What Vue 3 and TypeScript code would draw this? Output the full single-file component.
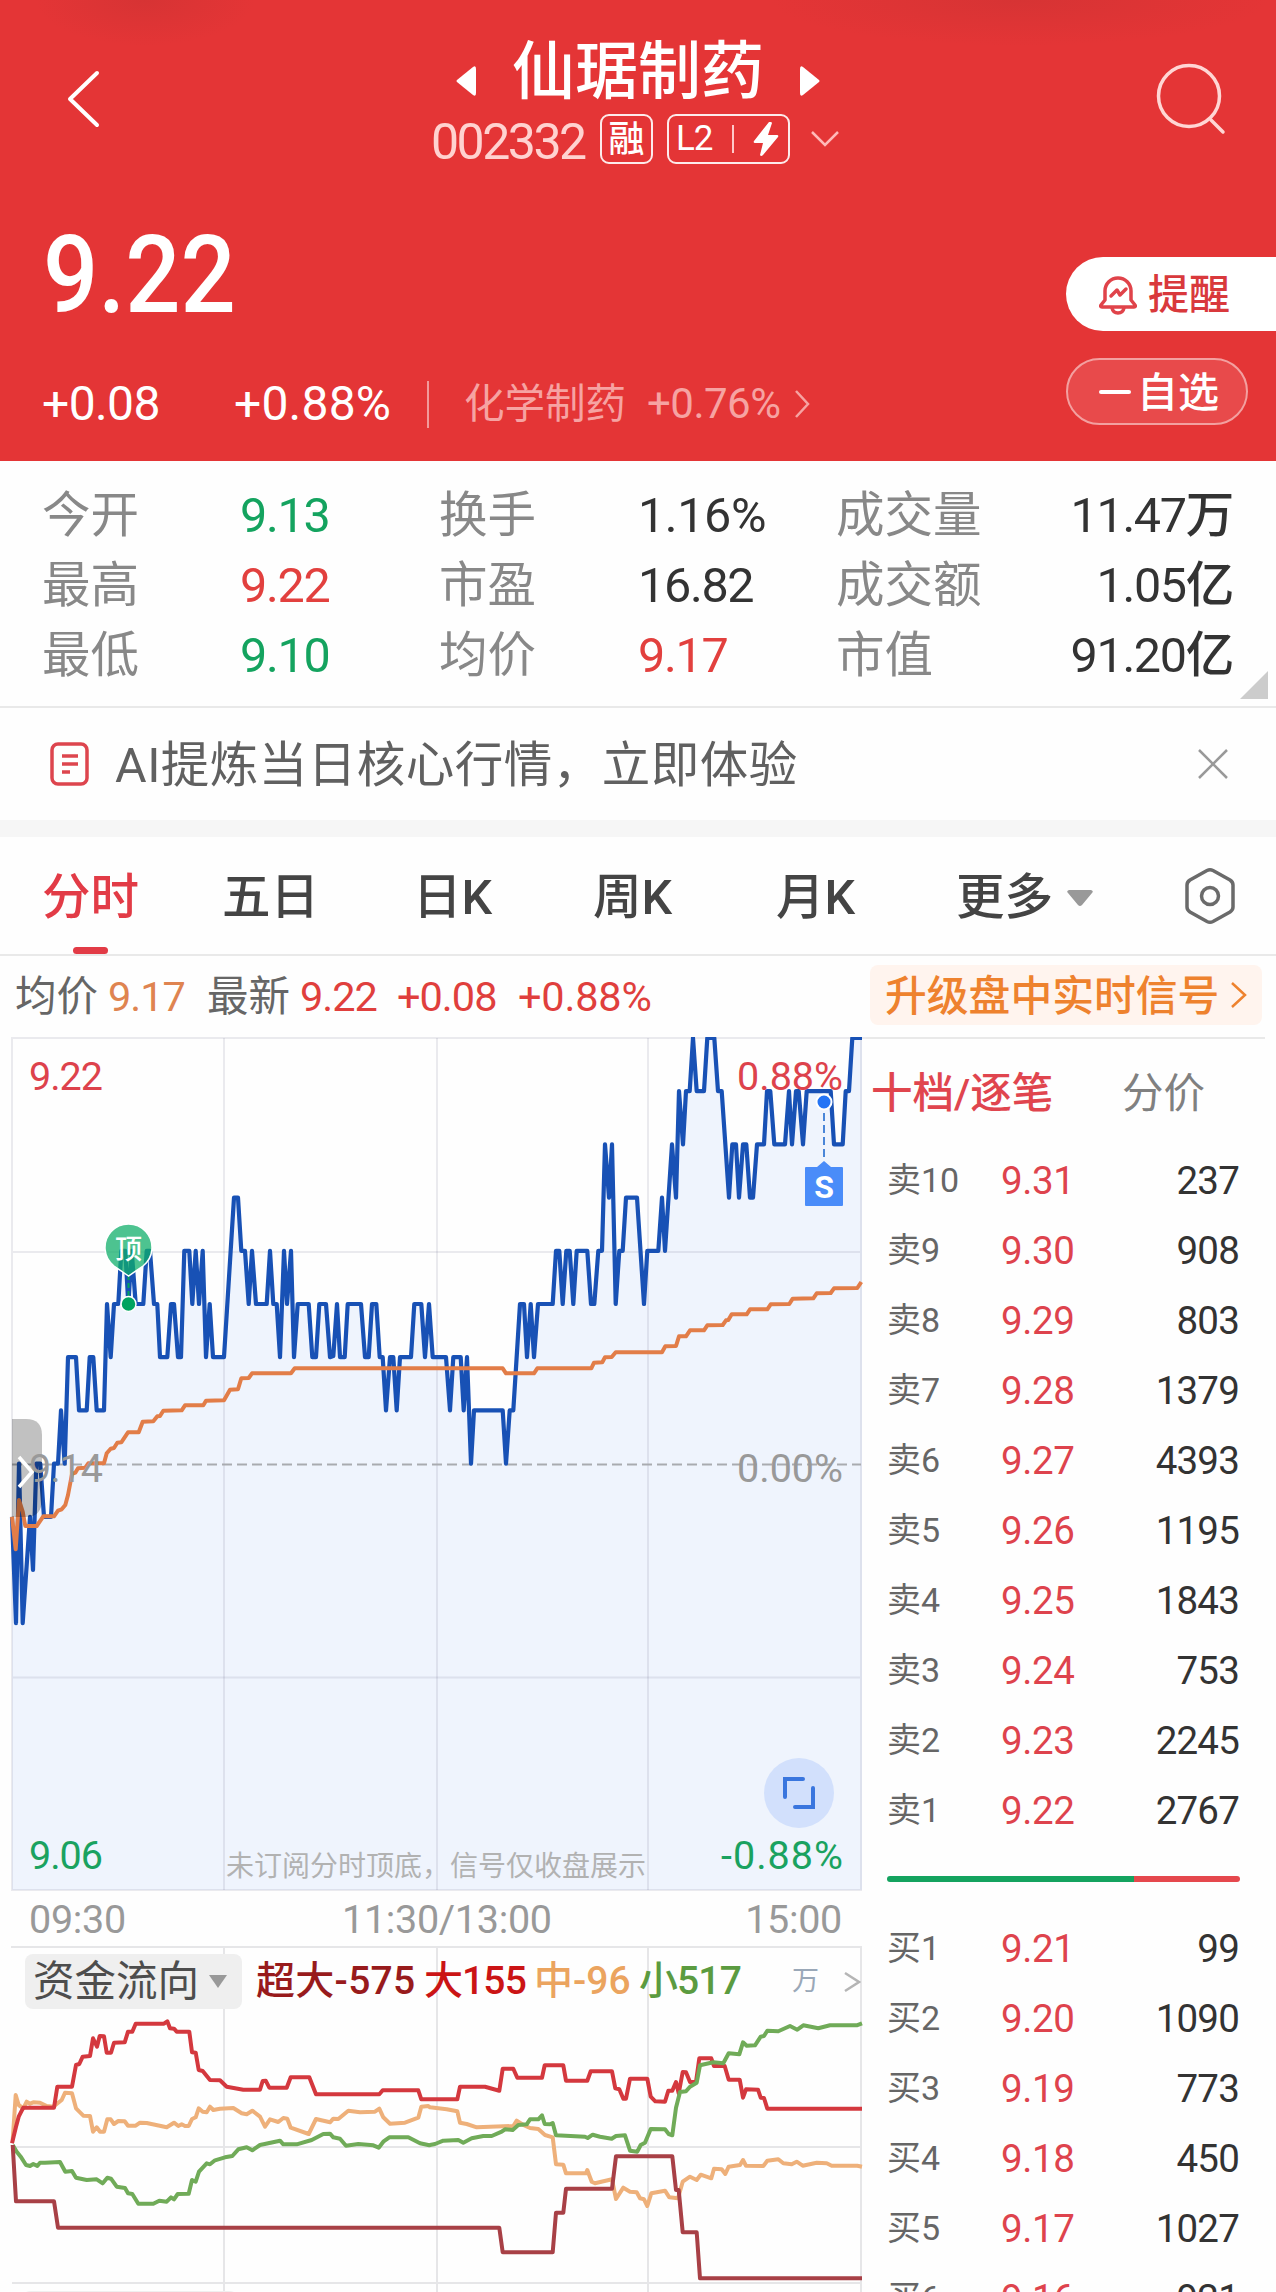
<script setup lang="ts">
type Pt = [number, number]
interface Order { name: string; price: string; volume: string }

const stats = [
  ['今开', '9.13', 'down', '换手', '1.16%', 'wide', '成交量', '11.47万'],
  ['最高', '9.22', 'up', '市盈', '16.82', '', '成交额', '1.05亿'],
  ['最低', '9.10', 'down', '均价', '9.17', 'up', '市值', '91.20亿'],
]

const tabs = ['分时', '五日', '日K', '周K', '月K']

const toOrders = (side: string, rows: [number, string, string][]): Order[] =>
  rows.map(([n, price, volume]) => ({ name: side + n, price, volume }))

const asks = toOrders('卖', [
  [10, '9.31', '237'], [9, '9.30', '908'], [8, '9.29', '803'], [7, '9.28', '1379'], [6, '9.27', '4393'],
  [5, '9.26', '1195'], [4, '9.25', '1843'], [3, '9.24', '753'], [2, '9.23', '2245'], [1, '9.22', '2767'],
])
const bids = toOrders('买', [
  [1, '9.21', '99'], [2, '9.20', '1090'], [3, '9.19', '773'], [4, '9.18', '450'], [5, '9.17', '1027'], [6, '9.16', '921'],
])

// Series are stored as "x,y" pairs in thirds of a pixel, one string per session.
const SESSION = 1290
const parse = (s: string): Pt[] => s.trim().split(/\s+/).map((p) => p.split(',').map(Number) as Pt)
const shift = (pts: Pt[], dx: number, dy: number): Pt[] => pts.map(([x, y]) => [x + dx, y + dy])
const draw = (pts: Pt[]): string => pts.map(([x, y]) => `${(x / 3).toFixed(1)},${(y / 3).toFixed(1)}`).join(' ')

// Price ticks: the second number counts cents below 9.22.
const priceAm = parse(`36,9 48,11 57,8 68,11 90,9 99,10 109,8 121,8 132,9 153,9 162,8 174,8 183,7 194,8 204,6 228,6 237,7 260,7
269,6 280,6 290,7 312,7 321,5 332,6 342,5 355,5 364,4 376,4 385,5 395,4 407,5 430,5 440,4 450,4 462,5 472,5 480,6 502,6 513,5
522,5 534,6 543,6 553,4 568,4 577,5 587,4 597,5 608,4 618,6 629,5 639,6 672,6 702,3 714,3 724,4 735,4 746,5 756,4 768,5 800,5
810,4 820,5 830,5 840,6 852,4 861,5 873,4 882,6 893,5 926,5 937,6 948,6 958,5 978,5 990,6 1000,5.98 1011,5 1020,6 1034,6
1043,5 1083,5 1095,6 1106,6 1116,5 1129,5 1139,6 1148,6 1158,7 1170,6 1180,6 1190,7 1200,6 1233,6 1243,5 1264,5 1275,6 1287,5`)
const pricePm = parse(`8,6 48,6 60,7 70,6 92,6 101,7 111,6 123,8 132,7 218,7 228,8 239,7 250,7 270,5 282,5 291,6 302,5 312,6 324,5
368,5 378,4 388,4 398,5 409,4 419,4 430,5 440,4 472,4 483,5 493,5 505,4 516,4 525,2 537,3 546,2 557,5 568,4 578,4 588,3 621,3
642,5 652,4 685,4 696,3 705,4 726,2 738,3 747,1 759,2 768,1 779,1 789,0 800,1 822,1 832,0 853,0 864,1 875,1 897,3 907,2 918,2
927,3 939,2 949,2 960,3 969,3 981,2 1002,2 1011,1 1021,1 1033,2 1065,2 1077,1 1086,2 1098,1 1106,1 1119,2 1130,1 1202,1
1212,2 1238,2 1247,1 1257,1 1267,0 1296,0`)
const price = draw(
  [...priceAm, ...shift(pricePm, SESSION, 0)].map(([x, level]): Pt => [x, 3 + level * 159.6]),
)
const priceArea = `12,853 ${price} 862,853`

const average = draw([
  ...shift(parse(`36,350 47,448 57,300 68,335 76,378 110,378 130,349 162,349 174,332 185,328 196,315 204,285 216,222 226,218
234,205 256,203 265,190 312,190 320,160 332,146 342,144 352,128 364,127 384,97 416,97 428,65 460,64 472,49 480,48 490,32
545,31 555,16 610,16 618,2 672,1`), 0, 1089),
  ...shift(parse('690,1349 714,1348 724,1315 746,1314 756,1300 873,1300 884,1285'), 0, -291),
  ...shift(parse(`218,1285 228,1300 312,1300 322,1285 484,1285 492,1268 517,1267 525,1252 545,1251 557,1237 696,1237 706,1219
738,1218 747,1189 768,1189 780,1171 822,1171 832,1156 878,1155 888,1141 895,1140 905,1123 950,1123 960,1108 1012,1108
1022,1093 1078,1092 1088,1076 1150,1075 1160,1060 1202,1059 1212,1045 1282,1044 1294,1026`), SESSION, -291),
])

const flow = (am: string, pm: string): string =>
  draw(shift([...parse(am), ...shift(parse(pm), SESSION, 0)], 0, -198))

const flows = [
  {
    color: '#eeb07a',
    points: flow(
      `38,780 47,645 56,675 70,685 80,665 90,671 100,667 120,668 140,678 160,680 185,660 195,638 216,640 228,685 250,707 270,708 279,755
290,742 300,755 312,755 322,718 332,718 342,732 355,723 374,724 384,737 407,737 420,728 440,729 500,742 522,728 535,738 545,733
555,738 566,738 576,717 587,712 596,685 608,695 620,697 630,680 640,690 660,686 700,684 725,700 740,703 757,692 780,710
795,740 810,718 835,726 850,714 862,716 872,743 926,762 948,717 990,727 1000,716 1015,717 1045,692 1080,697 1125,695
1138,686 1150,712 1170,731 1215,728 1255,713 1264,680 1285,678`,
      `0,682 50,688 82,694 90,728 110,732 140,742 250,738 260,722 280,735 300,744 325,747 345,765 368,772 378,853 400,854 408,880
468,880 472,870 485,905 495,910 546,898 558,957 580,923 600,935 620,937 630,955 642,958 652,978 664,940 705,932 718,952 744,955
758,905 780,890 800,900 812,884 844,895 852,866 875,868 886,882 896,860 930,855 939,840 948,857 1000,858 1012,842 1045,838
1060,850 1085,853 1100,845 1118,857 1160,848 1190,850 1205,857 1282,857 1296,860`,
    ),
  },
  {
    color: '#d4383e',
    points: flow(
      `36,790 48,740 56,710 70,683 162,683 172,620 216,620 228,555 238,552 248,530 270,528 279,475 291,500 299,468 312,469 320,518
333,518 342,488 374,487 384,455 397,455 407,431 492,431 502,424 510,445 522,446 530,455 568,455 576,517 587,518 596,570
608,573 630,600 660,601 680,620 730,629 780,629 788,603 797,602 808,623 860,623 872,592 928,592 948,643 1138,643 1148,631
1255,631 1264,658`,
      `82,658 90,620 165,620 208,632 218,566 250,566 262,593 336,593 344,556 400,556 408,602 472,602 482,574 546,574 556,625
568,628 580,656 588,656 600,596 652,596 662,650 676,664 705,665 715,632 727,632 738,606 746,640 758,576 768,577 780,606
798,606 808,535 844,535 852,558 884,558 896,599 929,599 939,653 948,628 984,629 992,653 1002,654 1012,686 1296,686`,
    ),
  },
  {
    color: '#70ab58',
    points: flow(
      `38,795 50,815 62,830 78,855 90,858 100,852 112,858 120,848 135,848 180,846 196,875 216,873 228,893 260,900 290,898 308,910
322,893 333,896 350,920 375,924 384,940 397,942 415,971 460,971 478,962 500,965 513,952 522,958 533,942 566,941 576,900
587,905 597,875 620,850 630,853 645,841 675,832 697,828 715,808 740,802 757,811 780,795 840,782 850,793 890,793 935,780
970,762 990,761 1000,772 1020,776 1038,797 1075,792 1120,796 1136,803 1150,785 1168,772 1225,772 1260,790 1288,796`,
      `0,795 15,792 40,782 85,780 100,788 125,775 160,768 185,768 215,755 225,748 248,750 265,735 290,733 300,718 325,718 336,706
344,732 360,733 368,729 378,766 465,770 473,774 488,764 510,770 545,776 558,768 585,766 600,812 622,815 632,795 645,788
662,747 705,748 716,762 727,766 738,683 750,636 768,634 780,620 800,608 810,556 850,547 880,550 896,520 928,523 939,487
950,497 975,496 992,470 1002,468 1012,452 1045,454 1080,438 1102,449 1120,436 1165,445 1200,436 1280,436 1296,430`,
    ),
  },
  {
    color: '#a84046',
    points: flow(
      '38,795 48,964 162,964 174,1043 1200,1043',
      `208,1043 218,1117 368,1117 378,998 400,998 408,926 546,926 558,829 727,829 738,930 746,930 758,1057 800,1057 810,1195
1296,1195`,
    ),
  },
]

const columns = [224, 437, 648]
</script>

<template>
  <div class="page">
    <header class="hero">
      <div class="nav">
        <svg class="back" width="36" height="60" viewBox="0 0 36 60"><path d="M31 4 4 30l27 26" /></svg>
        <div class="heading">
          <div class="title-row">
            <svg class="arrow" width="20" height="30" viewBox="0 0 20 30"><path d="M1 14Q0 15 1 16L17 29Q20 31 20 27V3Q20-1 17 1Z" /></svg>
            <h1>仙琚制药</h1>
            <svg class="arrow" width="20" height="30" viewBox="0 0 20 30"><path d="M19 14Q20 15 19 16L3 29Q0 31 0 27V3Q0-1 3 1Z" /></svg>
          </div>
          <div class="code-row">
            <span class="code">002332</span>
            <span class="badge margin">融</span>
            <span class="badge level">
              <span class="l2">L2</span><i />
              <svg width="26" height="34" viewBox="0 0 26 34"><path d="M16 0 1 19q-1 2 1 2h8L7 33q1 2 3 0L25 15q1-2-1-2h-9l4-12q-1-2-3-1Z" /></svg>
            </span>
            <svg class="caret" width="28" height="18" viewBox="0 0 28 18"><path d="M1 2l13 13L27 2" /></svg>
          </div>
        </div>
        <svg class="search" width="74" height="74" viewBox="0 0 74 74"><circle cx="35" cy="35" r="30.5" /><path d="M57 59 69 71" /></svg>
      </div>
      <div class="quote">
        <div class="quote-main">
          <div class="price">9.22</div>
          <div class="change">
            <span>+0.08</span>
            <span class="pct">+0.88%</span>
            <i />
            <span class="sector">化学制药</span>
            <span class="sector sector-pct">+0.76%</span>
            <svg width="18" height="30" viewBox="0 0 18 30"><path d="M3 2l12 13L3 28" /></svg>
          </div>
        </div>
        <div class="actions">
          <div class="remind">
            <svg width="38" height="42" viewBox="0 0 38 42">
              <path d="M6 27V18a13 13 0 0 1 26 0v9l4 5q1 2-1 2H3q-2 0-1-2Z" />
              <path d="M13 35q1 5 6 5t6-5" />
              <path d="M12 23l6-6 3 5 6-6" />
            </svg>
            <span>提醒</span>
          </div>
          <div class="watch"><i /><span>自选</span></div>
        </div>
      </div>
    </header>

    <section class="stats">
      <div v-for="row in stats" :key="row[0]" class="stat-row">
        <span class="label">{{ row[0] }}</span>
        <span :class="row[2]">{{ row[1] }}</span>
        <span class="label">{{ row[3] }}</span>
        <span :class="row[5]">{{ row[4] }}</span>
        <span class="label">{{ row[6] }}</span>
        <span class="end">{{ row[7] }}</span>
      </div>
      <svg class="corner" width="28" height="28" viewBox="0 0 28 28"><path d="M28 0V28H0Z" /></svg>
    </section>

    <section class="ai">
      <svg width="40" height="44" viewBox="0 0 40 44">
        <rect x="2" y="2" width="35" height="40" rx="6" />
        <path d="M12 14h16M12 22h16M12 30h8" />
      </svg>
      <span>AI提炼当日核心行情，立即体验</span>
      <svg class="close" width="32" height="32" viewBox="0 0 32 32"><path d="M2 2l28 28M30 2 2 30" /></svg>
    </section>

    <nav class="tabs">
      <span v-for="(tab, i) in tabs" :key="tab" :class="{ active: i === 0 }">{{ tab }}</span>
      <span class="more">更多<svg width="26" height="16" viewBox="0 0 26 16"><path d="M2 0H24Q27 1 25 3L15 15Q13 17 11 15L1 3Q-1 1 2 0Z" /></svg></span>
      <svg class="gear" width="52" height="58" viewBox="0 0 52 58">
        <path d="M23 3.500q3-1.500 6 0L46 13q3 2 3 5V40q0 3-3 5L29 54.500q-3 1.500-6 0L6 45q-3-2-3-5V18q0-3 3-5Z" />
        <circle cx="26" cy="29" r="8.500" />
      </svg>
    </nav>

    <main class="body">
      <div class="left">
        <div class="summary">
          <span class="k">均价</span><span class="v avg">9.17</span>
          <span class="k">最新</span><span class="v">9.22</span>
          <span class="v">+0.08</span><span class="v last">+0.88%</span>
        </div>

        <svg class="chart" width="866" height="855" viewBox="0 0 866 855">
          <polygon :points="priceArea" fill="#eff4fd" />
          <g stroke="#5a5a78" stroke-opacity=".12" stroke-width="2" fill="none">
            <path d="M11 1H866M12 1V854M861 1V854M11 853H862M12 215H861M12 640.500H861" />
            <path v-for="x in columns" :key="x" :d="`M${x} 1V853`" />
          </g>
          <path d="M12 427.500H861" stroke="#a9abb0" stroke-width="2" stroke-dasharray="10 5" />
          <polyline :points="price" fill="none" stroke="#1851b5" stroke-width="4.200" stroke-linejoin="round" />
          <polyline :points="average" fill="none" stroke="#e27d48" stroke-width="4" stroke-linejoin="round" />

          <path d="M12 382H26Q42 382 42 398V462Q42 480 26 480H12Z" fill="#000" fill-opacity=".24" />
          <path d="M19 420 32 435 19 450" fill="none" stroke="#fff" stroke-width="3.500" />

          <g class="axis">
            <text x="29" y="53" textLength="74" fill="#dd424c">9.22</text>
            <text x="29" y="445" textLength="74" fill="#999">9.14</text>
            <text x="29" y="832" textLength="74" fill="#1aa260">9.06</text>
            <text x="737" y="53" textLength="106" fill="#dd424c">0.88%</text>
            <text x="737" y="445" textLength="106" fill="#999">0.00%</text>
            <text x="721" y="832" textLength="122" fill="#1aa260">-0.88%</text>
          </g>
          <text class="note" x="226" y="839" textLength="420">未订阅分时顶底，信号仅收盘展示</text>

          <path d="M128.500 238V262" stroke="#00a35f" stroke-width="2" stroke-dasharray="5 3" />
          <circle cx="128.500" cy="267" r="7.500" fill="#00a35f" stroke="#fff" stroke-width="1.500" />
          <path d="M128.500 239 114 229A23.500 23.500 0 1 1 143 229Z" fill="#0fae69" fill-opacity=".74" stroke="#fff" stroke-width="1.500" />
          <text class="peak" x="128.500" y="222">顶</text>

          <path d="M824 76V124" stroke="#4a86d8" stroke-width="2" stroke-dasharray="8 4" />
          <circle cx="824" cy="65" r="7.500" fill="#2474f5" stroke="#fff" stroke-width="2" />
          <path d="M806 130H817L824 124 831 130H842Q843 130 843 131V168Q843 169 842 169H806Q805 169 805 168V131Q805 130 806 130Z" fill="#4a8cf9" />
          <text class="sell" x="824" y="161">S</text>

          <circle cx="799" cy="756" r="35" fill="#d2e0fc" />
          <path d="M785 760V742H803M813 751V770H795" fill="none" stroke="#3a76de" stroke-width="4" stroke-linecap="round" />
        </svg>

        <div class="times"><span>09:30</span><span>11:30/13:00</span><span>15:00</span></div>

        <div class="flow">
          <svg width="866" height="346" viewBox="0 0 866 346">
            <g stroke="#e6e6e8" stroke-width="2" fill="none">
              <path d="M11 1H862M12 201H861M12 337H861M861 1V346" />
              <path v-for="x in columns" :key="x" :d="`M${x} 1V346`" />
            </g>
            <polyline
              v-for="s in flows" :key="s.color" :points="s.points" :stroke="s.color"
              fill="none" stroke-width="4" stroke-linejoin="round"
            />
            <path d="M26 346q2-1 6-1H228q4 0 6 1Z" fill="#efefef" />
          </svg>
          <div class="legend">
            <span class="picker">资金流向<svg width="18" height="13" viewBox="0 0 18 13"><path d="M0 0H18L9 13Z" /></svg></span>
            <span class="lg xl">超大-575</span>
            <span class="lg l">大155</span>
            <span class="lg m">中-96</span>
            <span class="lg s">小517</span>
            <span class="unit">万</span>
            <svg class="go" width="18" height="24" viewBox="0 0 18 24"><path d="M2 3l14 9L2 21" /></svg>
          </div>
        </div>
      </div>

      <aside class="right">
        <div class="upgrade">
          <span>升级盘中实时信号</span>
          <svg width="18" height="30" viewBox="0 0 18 30"><path d="M2 3l13 12L2 27" /></svg>
        </div>
        <div class="book">
          <div class="book-tabs"><span class="on">十档/逐笔</span><span>分价</span></div>
          <div v-for="o in asks" :key="o.name" class="order">
            <span>{{ o.name }}</span><b>{{ o.price }}</b><em>{{ o.volume }}</em>
          </div>
          <div class="ratio"><i class="sellside" /><i class="buyside" /></div>
          <div v-for="o in bids" :key="o.name" class="order">
            <span>{{ o.name }}</span><b>{{ o.price }}</b><em>{{ o.volume }}</em>
          </div>
        </div>
      </aside>
    </main>
  </div>
</template>

<style>
body { margin: 0; background: #fefefe; }
</style>

<style scoped>
.page {
  width: 1276px;
  height: 2292px;
  overflow: hidden;
  background: #fefefe;
  font-family: Roboto, "Noto Sans CJK SC", sans-serif;
  color: #333;
  white-space: nowrap;
}
.page svg { display: block; flex: none; }
.page i { display: block; flex: none; }

.hero {
  height: 461px;
  color: #fff;
  background:
    radial-gradient(ellipse 110px 46px at 145px 0, rgba(190, 48, 48, .35), rgba(190, 48, 48, 0)),
    radial-gradient(ellipse 250px 46px at 1020px 0, rgba(190, 48, 48, .35), rgba(190, 48, 48, 0)),
    #e43536;
}
.nav { display: grid; grid-template-columns: 431px 414px 1fr; height: 219px; align-items: start; }
.back { margin: 69px 0 0 66px; fill: none; stroke: #fff; stroke-width: 4; stroke-linecap: round; stroke-linejoin: round; }
.heading { padding-top: 38px; }
.title-row { display: flex; justify-content: center; align-items: center; gap: 36px; height: 64px; }
h1 { margin: 0; padding-top: 3px; font-size: 63px; line-height: 64px; font-weight: 500; }
.arrow { margin-top: 22px; fill: #fff; }
.code-row { display: flex; align-items: center; height: 50px; margin-top: 12px; }
.code { width: 169px; padding-top: 5px; font-size: 50px; line-height: 50px; letter-spacing: -2.5px; color: #ffd2d0; }
.badge { box-sizing: border-box; height: 50px; border: 2px solid rgba(255, 255, 255, .9); border-radius: 9px; display: flex; align-items: center; }
.margin { width: 53px; justify-content: center; padding-top: 3px; font-size: 36px; line-height: 43px; font-weight: 500; }
.level { width: 123px; margin-left: 14px; padding-left: 7px; }
.l2 { width: 56px; font-size: 35px; line-height: 44px; letter-spacing: -1px; }
.level i { width: 2px; height: 28px; background: #ffc9c9; margin-right: 19px; }
.level svg { fill: #fff; }
.caret { margin-left: 21px; fill: none; stroke: #ffb9b9; stroke-width: 2.5; }
.search { margin: 61px 0 0 309px; fill: none; stroke: #ffd6d4; stroke-width: 3.5; stroke-linecap: round; }

.quote { display: flex; justify-content: space-between; }
.price {
  margin-left: 43px;
  padding-top: 1px;
  font-size: 108px;
  line-height: 110px;
  font-weight: 500;
  transform: scaleX(.9);
  transform-origin: 0 50%;
}
.change {
  display: grid;
  grid-template-columns: 192px 194px 36px 183px 148px auto;
  align-items: center;
  height: 60px;
  margin: 44px 0 0 42px;
  font-size: 48px;
  line-height: 60px;
  font-weight: 450;
  letter-spacing: -.6px;
}
.change .pct { letter-spacing: .2px; }
.change i { width: 2px; height: 47px; margin-left: -1px; background: #f29a9a; }
.change .sector { font-size: 40.500px; font-weight: 400; letter-spacing: 0; color: #f6a3a2; }
.change .sector-pct { font-size: 42px; letter-spacing: -.5px; }
.change svg { margin-left: -2px; fill: none; stroke: #f6a3a2; stroke-width: 2.5; }
.actions { width: 210px; padding-top: 38px; }
.remind { display: flex; align-items: center; box-sizing: border-box; height: 74px; padding-left: 33px; border-radius: 37px 0 0 37px; background: #fff; color: #d9393c; }
.remind svg { fill: none; stroke: #e0434a; stroke-width: 3.5; stroke-linecap: round; stroke-linejoin: round; }
.remind span { margin-left: 11px; padding-top: 2px; font-size: 41px; line-height: 72px; font-weight: 500; }
.watch { display: flex; align-items: center; box-sizing: border-box; width: 182px; height: 67px; margin-top: 27px; padding-left: 31px; border: 2px solid #f3a0a0; border-radius: 34px; background: #e84a4b; }
.watch i { width: 32px; height: 4px; border-radius: 2px; background: #fff; }
.watch span { margin-left: 6px; padding-top: 3px; font-size: 41px; line-height: 58px; font-weight: 500; }

.stats { position: relative; height: 226px; padding: 19px 43px 0 43px; border-bottom: 2px solid #e9e9e9; }
.stat-row { display: grid; grid-template-columns: 197px 200px 198px 198px 160px 1fr; height: 70px; font-size: 48.500px; line-height: 71px; letter-spacing: -1.3px; font-weight: 450; }
.stat-row .label { color: #888; font-weight: 400; letter-spacing: 0; }
.stat-row .label:first-child, .stat-row .label:nth-child(3) { margin-left: -1px; }
.stat-row .wide { letter-spacing: -.4px; }
.end { text-align: right; }
.up { color: #e2403e; }
.down { color: #14a35f; }
.corner { position: absolute; right: 8px; bottom: 7px; fill: #ccc; }

.ai { display: flex; align-items: center; height: 112px; padding: 0 47px 0 50px; border-bottom: 17px solid #f6f6f6; font-size: 48.500px; line-height: 110px; color: #606060; }
.ai svg { fill: none; stroke: #dd454e; stroke-width: 3.5; }
.ai span { margin-left: 25px; padding-top: 4px; letter-spacing: .5px; }
.ai .close { margin-left: auto; stroke: #999; stroke-width: 2.5; }

.tabs {
  display: grid;
  grid-template-columns: 180px 191px 180px 183px 180px 228px 52px;
  align-items: center;
  height: 117px;
  padding-left: 42px;
  border-bottom: 2px solid #e9e9e9;
  font-size: 48.500px;
  font-weight: 500;
  color: #444;
}
.tabs span { line-height: 113px; padding-top: 4px; }
.tabs .active { position: relative; color: #e23b46; }
.tabs .active::after { content: ""; position: absolute; left: 31px; bottom: 0; width: 35px; height: 7px; border-radius: 4px; background: #e23b46; }
.more { display: flex; align-items: center; gap: 14px; }
.more svg { fill: #999; }
.gear { fill: none; stroke: #6a6a6a; stroke-width: 3.5; }

.body { display: flex; align-items: flex-start; }
.left { width: 866px; }
.summary { display: flex; height: 81px; padding-left: 15px; font-size: 41.500px; line-height: 81px; }
.summary .k { width: 93px; color: #666; }
.summary .v { width: 97px; color: #e03f3d; letter-spacing: -1px; font-weight: 450; }
.summary .v.avg { width: 99px; color: #df8450; }
.summary .v + .v { width: 121px; }
.summary .v.last { letter-spacing: -.2px; }
.axis { font-size: 39.500px; font-weight: 450; }
.note { font-size: 28px; fill: #b2b2b2; }
.peak { font-size: 27px; font-weight: 500; fill: #fff; text-anchor: middle; }
.sell { font-size: 32px; font-weight: 700; fill: #fff; text-anchor: middle; }
.times { display: grid; grid-template-columns: 313px 1fr auto; height: 54px; padding: 0 24px 0 29px; font-size: 39.500px; line-height: 55px; letter-spacing: -.3px; color: #999; }

.flow { position: relative; height: 346px; }
.legend { position: absolute; left: 25px; top: 8px; display: flex; align-items: center; height: 55px; line-height: 57px; }
.picker { display: flex; align-items: center; justify-content: space-between; box-sizing: border-box; width: 217px; height: 55px; padding: 0 15px 0 8px; border-radius: 8px; background: #efefef; font-size: 41.500px; color: #4d4d4d; }
.picker svg { fill: #999; }
.lg { font-size: 39px; font-weight: 500; letter-spacing: -.9px; }
.xl { width: 168px; margin-left: 14px; color: #981b1c; letter-spacing: .3px; }
.l { width: 110px; color: #cb1415; }
.m { width: 105px; color: #eba45f; letter-spacing: 0; }
.s { width: 153px; color: #5b9b40; }
.unit { width: 51px; font-size: 27px; color: #9aa8b8; }
.go { fill: none; stroke: #b5b5b5; stroke-width: 2.5; }

.right { width: 410px; }
.upgrade { display: flex; align-items: center; box-sizing: border-box; width: 392px; height: 60px; margin: 9px 0 0 4px; padding-left: 15px; border-radius: 8px; background: #fff4ee; font-size: 41.800px; font-weight: 500; color: #ee822e; }
.upgrade span { padding-top: 3px; line-height: 57px; }
.upgrade svg { margin-left: 11px; fill: none; stroke: #ee822e; stroke-width: 2.5; }
.book { width: 399px; margin-top: 12px; border-top: 2px solid #e9e9e9; }
.book-tabs { display: flex; height: 106px; padding-left: 5px; font-size: 41.500px; line-height: 109px; color: #808080; }
.book-tabs .on { width: 251px; font-weight: 500; color: #e0454e; }
.order { display: grid; grid-template-columns: 114px 1fr auto; height: 70px; padding: 0 26px 0 21px; line-height: 71px; font-size: 38.500px; }
.order span { font-size: 34px; color: #666; }
.order b { font-weight: 450; letter-spacing: -.4px; color: #de434d; }
.order em { font-style: normal; font-weight: 450; letter-spacing: -.8px; }
.ratio { display: flex; align-items: center; height: 68px; padding-left: 21px; }
.ratio i { height: 6px; }
.sellside { width: 247px; border-radius: 3px 0 0 3px; background: #14a35f; }
.buyside { width: 106px; border-radius: 0 3px 3px 0; background: #e5484d; }
</style>
